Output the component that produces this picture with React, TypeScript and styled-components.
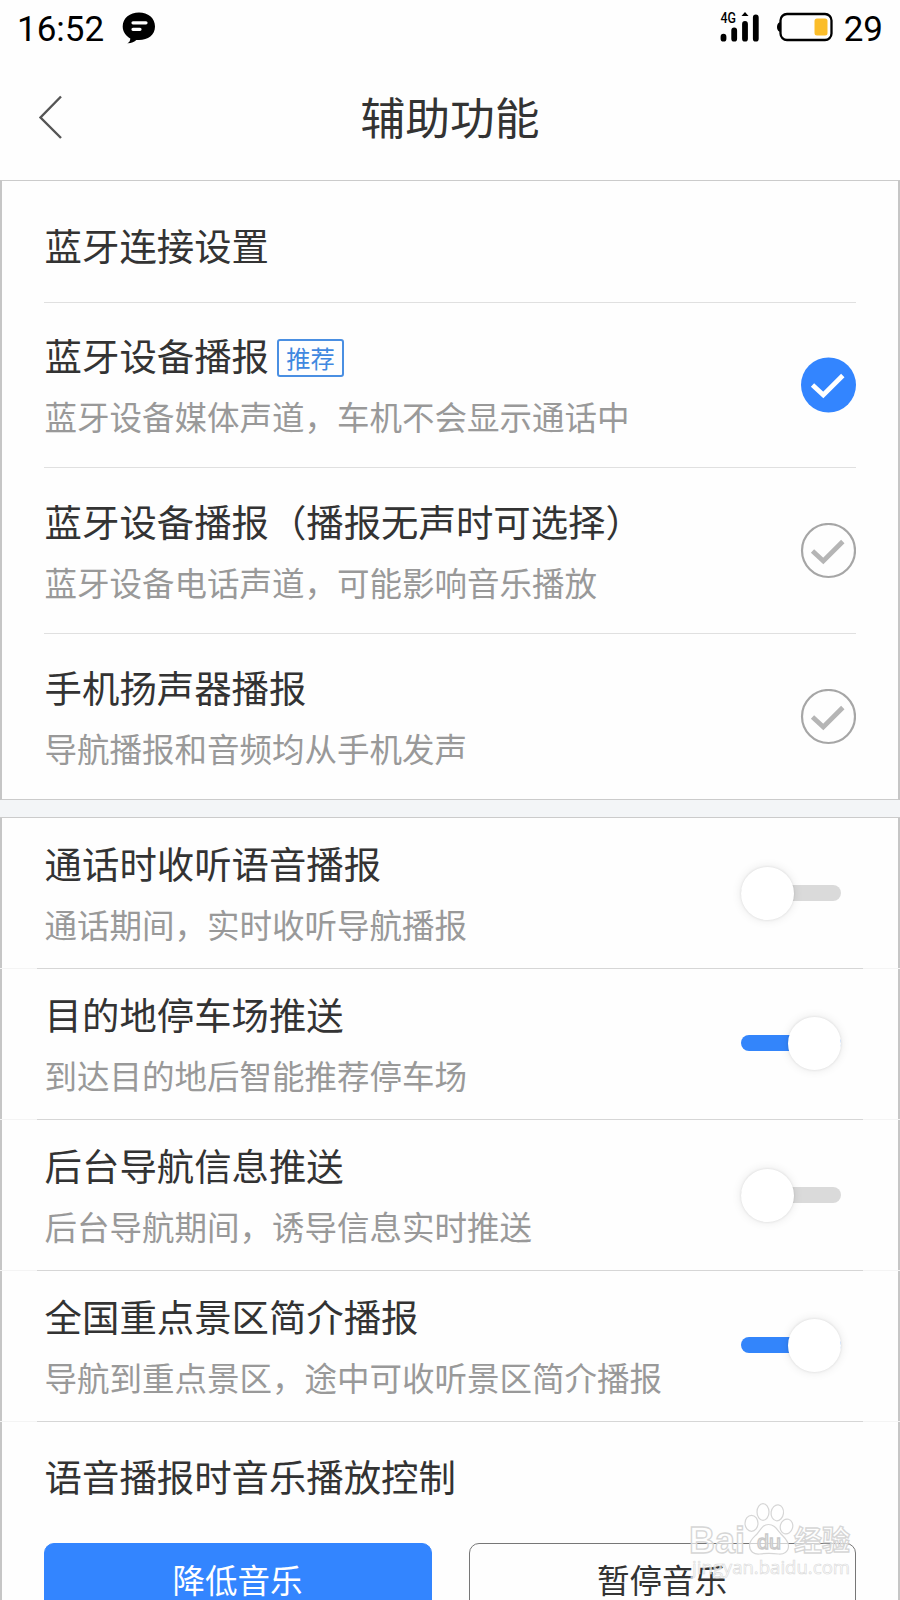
import React from "react";
import styled, { createGlobalStyle } from "styled-components";

const GlobalStyle = createGlobalStyle`
  * { box-sizing: border-box; }
  body {
    margin: 0;
    background: #fefefe;
    font-family: "Noto Sans CJK SC", sans-serif;
  }
`;

const Screen = styled.div`
  position: relative;
  width: 900px;
  height: 1600px;
  overflow: hidden;
  background: #fefefe;
  color: #333;
`;

const StatusBar = styled.div`
  display: flex;
  align-items: center;
  justify-content: space-between;
  height: 57px;
  padding: 0 17px;
  font: 400 35px/57px Roboto, sans-serif;
  color: #000;
`;

const StatusGroup = styled.div`
  display: flex;
  align-items: center;
  height: 57px;
`;

const StatusText = styled.span`
  padding-top: 1px;
`;

const MessageIcon = styled.svg`
  margin: 0 0 2px 18px;
`;

const SignalIcon = styled.svg`
  margin-bottom: 3px;
`;

const BatteryIcon = styled.svg`
  margin: 0 11px 3px 16px;
`;

const Header = styled.header`
  display: grid;
  grid-template-columns: 104px 1fr 104px;
  align-items: center;
  height: 123px;
`;

const BackButton = styled.button`
  display: flex;
  padding: 0 0 3px 36px;
  border: 0;
  background: none;
`;

const PageTitle = styled.h1`
  margin: 0;
  padding-bottom: 5px;
  text-align: center;
  font-size: 44.8px;
  font-weight: 400;
  line-height: 60px;
`;

const Panel = styled.section`
  border-top: 1px solid #cbcbcb;
`;

const RadioPanel = styled(Panel)`
  padding: 0 42px;
  border-left: 2px solid #c6c6c6;
  border-right: 2px solid #c6c6c6;
  border-bottom: 1px solid #cbcbcb;
`;

const Gap = styled.div`
  height: 17px;
  background: #f3f5f7;
`;

const Row = styled.div`
  display: flex;
  align-items: center;
  justify-content: space-between;
`;

const HeadingRow = styled(Row)`
  height: 121px;
  padding-top: 7px;
`;

const RadioRow = styled(Row)<{ $height: number }>`
  height: ${(p) => p.$height}px;
  border-top: 1px solid #e0e0e0;
`;

const SwitchRow = styled(Row)`
  height: 150px;
  padding: 0 57px 0 42px;
  border-left: 2px solid #c6c6c6;
  border-right: 2px solid #c6c6c6;
`;

const Separator = styled.div`
  height: 1px;
  padding: 0 37px;
  background: #f4f4f4;

  &::after {
    content: "";
    display: block;
    height: 1px;
    background: #d6d6d6;
  }
`;

const Labels = styled.div`
  display: flex;
  flex-direction: column;
  gap: 14px;
  padding-bottom: 2px;
`;

const TitleLine = styled.div`
  display: flex;
  align-items: center;
  height: 50px;
  padding-left: 0.6px;
`;

const Title = styled.span`
  font-size: 37.4px;
  line-height: 50px;
  white-space: nowrap;
`;

const Subtitle = styled.span`
  padding-left: 0.4px;
  font-size: 32.5px;
  line-height: 44px;
  color: #999;
  white-space: nowrap;
`;

const Badge = styled.span`
  width: 67px;
  height: 38px;
  margin: 5px 0 0 8px;
  border: 2px solid #4a8fe2;
  border-radius: 3px;
  color: #4088e0;
  font-size: 24.3px;
  line-height: 33px;
  text-align: center;
`;

const SwitchTrack = styled.span<{ $on: boolean }>`
  display: flex;
  align-items: center;
  justify-content: ${(p) => (p.$on ? "flex-end" : "flex-start")};
  width: 100px;
  height: 16px;
  margin-bottom: ${(p) => (p.$on ? 2 : 0)}px;
  border-radius: 8px;
  background: ${(p) => (p.$on ? "#3385fb" : "#dadada")};
`;

const SwitchKnob = styled.span`
  flex: none;
  width: 53px;
  height: 53px;
  border-radius: 50%;
  background: #fff;
  box-shadow: 0 0 2px 1px rgba(0, 0, 0, 0.05), 0 0 10px 1px rgba(0, 0, 0, 0.08);
`;

const MusicBlock = styled.div`
  height: 260px;
  padding: 29px 42px 0;
  border-left: 2px solid #c6c6c6;
  border-right: 2px solid #c6c6c6;
`;

const ButtonGrid = styled.div`
  display: grid;
  grid-template-columns: 388px 387px;
  gap: 37px;
  margin-top: 42px;
`;

const ChoiceButton = styled.button<{ $primary?: boolean }>`
  height: 76px;
  padding: 0 1px 4px 0;
  border: 1px solid ${(p) => (p.$primary ? "#3385ff" : "#777")};
  border-radius: 10px;
  background: ${(p) => (p.$primary ? "#3385ff" : "transparent")};
  color: ${(p) => (p.$primary ? "#fff" : "#333")};
  font: 400 32.5px/44px "Noto Sans CJK SC", sans-serif;
`;

const Watermark = styled.svg`
  position: absolute;
  left: 684px;
  top: 1496px;
`;

function CheckMark({ checked }: { checked?: boolean }) {
  return (
    <svg width="56" height="56" viewBox="0 0 56 56" fill="none">
      {checked ? (
        <circle cx="28.5" cy="28" r="27.5" fill="#3385ff" />
      ) : (
        <circle cx="28.5" cy="27.5" r="26.5" stroke="#a6a6a6" strokeWidth="2.2" />
      )}
      <path d="M12.5 28 23.3 38 42.8 18.5" stroke={checked ? "#fff" : "#b5b5b5"} strokeWidth="4.8" />
    </svg>
  );
}

function Switch({ on = false }: { on?: boolean }) {
  return (
    <SwitchTrack $on={on} role="switch" aria-checked={on}>
      <SwitchKnob />
    </SwitchTrack>
  );
}

const outputs = [
  { title: "蓝牙设备播报", sub: "蓝牙设备媒体声道，车机不会显示通话中", badge: "推荐", checked: true, height: 165 },
  { title: "蓝牙设备播报（播报无声时可选择）", sub: "蓝牙设备电话声道，可能影响音乐播放", height: 166 },
  { title: "手机扬声器播报", sub: "导航播报和音频均从手机发声", height: 166 },
];

const toggles = [
  { title: "通话时收听语音播报", sub: "通话期间，实时收听导航播报", on: false },
  { title: "目的地停车场推送", sub: "到达目的地后智能推荐停车场", on: true },
  { title: "后台导航信息推送", sub: "后台导航期间，诱导信息实时推送", on: false },
  { title: "全国重点景区简介播报", sub: "导航到重点景区，途中可收听景区简介播报", on: true },
];

export default function App() {
  return (
    <Screen>
      <GlobalStyle />
      <StatusBar>
        <StatusGroup>
          <StatusText>16:52</StatusText>
          <MessageIcon width="34" height="34" viewBox="0 0 34 34">
            <path
              d="M17 1.500C26 1.500 33 7 33 15.500S26 29 17 29h-2.700c-1.800 2-5.200 3.500-9 3.300 2-.9 3-2.700 3-4.900C4 25 .7 20.800.7 15.500.7 7 8 1.500 17 1.500Z"
              fill="#000"
            />
            <path d="M11 11.800H24M11 18.300H18" stroke="#fff" strokeWidth="3.200" strokeLinecap="round" />
          </MessageIcon>
        </StatusGroup>
        <StatusGroup>
          <SignalIcon width="40" height="32" viewBox="0 0 40 32">
            <text x="0.500" y="12.300" fontFamily="Roboto" fontSize="14" fontWeight="500" textLength="15.500" lengthAdjust="spacingAndGlyphs">
              4G
            </text>
            <path
              d="M4 24.200v2M14.700 18v8.200M25.500 11.500v14.700M36.300 5v21.200"
              transform="translate(-.5 1.500)"
              stroke="#000"
              strokeWidth="5.800"
              strokeLinecap="round"
            />
            <path d="M25 1 28.500 5H21.500Z" fill="#000" />
          </SignalIcon>
          <BatteryIcon width="57" height="30" viewBox="0 0 57 30" fill="none">
            <path d="M5 10C2 10 1 13 1 15s1 5 4 5Z" fill="#000" />
            <rect x="4.500" y="2" width="51" height="26" rx="6.500" stroke="#000" strokeWidth="2.300" />
            <rect x="38.500" y="6.500" width="13" height="17" rx="2.500" fill="#fbbd29" />
          </BatteryIcon>
          <StatusText>29</StatusText>
        </StatusGroup>
      </StatusBar>

      <Header>
        <BackButton aria-label="返回">
          <svg width="28" height="46" viewBox="0 0 28 46" fill="none">
            <path d="M25 2.500 4.500 23.500 25 44" stroke="#555" strokeWidth="2.400" />
          </svg>
        </BackButton>
        <PageTitle>辅助功能</PageTitle>
      </Header>

      <RadioPanel>
        <HeadingRow>
          <TitleLine>
            <Title>蓝牙连接设置</Title>
          </TitleLine>
        </HeadingRow>
        {outputs.map((o) => (
          <RadioRow key={o.sub} $height={o.height}>
            <Labels>
              <TitleLine>
                <Title>{o.title}</Title>
                {o.badge && <Badge>{o.badge}</Badge>}
              </TitleLine>
              <Subtitle>{o.sub}</Subtitle>
            </Labels>
            <CheckMark checked={o.checked} />
          </RadioRow>
        ))}
      </RadioPanel>

      <Gap />

      <Panel>
        {toggles.map((t) => (
          <React.Fragment key={t.title}>
            <SwitchRow>
              <Labels>
                <TitleLine>
                  <Title>{t.title}</Title>
                </TitleLine>
                <Subtitle>{t.sub}</Subtitle>
              </Labels>
              <Switch on={t.on} />
            </SwitchRow>
            <Separator />
          </React.Fragment>
        ))}
        <MusicBlock>
          <TitleLine>
            <Title>语音播报时音乐播放控制</Title>
          </TitleLine>
          <ButtonGrid>
            <ChoiceButton $primary>降低音乐</ChoiceButton>
            <ChoiceButton>暂停音乐</ChoiceButton>
          </ButtonGrid>
        </MusicBlock>
      </Panel>

      <Watermark width="180" height="88" viewBox="0 0 180 88" stroke="#d6d6d6" fill="#fff" fillOpacity="0.65">
        <g strokeWidth="1.200">
          <ellipse cx="67.500" cy="27.300" rx="6.500" ry="8" />
          <ellipse cx="79" cy="16" rx="6" ry="8.300" />
          <ellipse cx="93.300" cy="16.800" rx="6.200" ry="8" transform="rotate(8 93.300 16.800)" />
          <ellipse cx="102.500" cy="30.500" rx="6.200" ry="7.500" transform="rotate(15 102.500 30.500)" />
          <path d="M84.500 28.500c6 0 8.500 5 12.500 9.500 4 4 7.500 7 7.500 12 0 6-5 8.500-10 8-6-.8-13-.8-19 0-5.500.5-10-2.500-10-8.500 0-5 3.500-7.500 7.500-11.500 4-4.500 5.500-9.500 11.500-9.500Z" />
        </g>
        <g fontFamily="Liberation Sans" fontWeight="700" strokeWidth="1.300">
          <text x="5" y="57" fontSize="36" textLength="56" lengthAdjust="spacingAndGlyphs">Bai</text>
          <text x="73" y="53" fontSize="20" fontWeight="400" textLength="24" lengthAdjust="spacingAndGlyphs" stroke="#cacaca">du</text>
        </g>
        <text x="110" y="55" fontFamily="Noto Sans CJK SC" fontWeight="700" fontSize="28" strokeWidth="1.300" textLength="56" lengthAdjust="spacingAndGlyphs">
          经验
        </text>
        <text x="8" y="78" fontFamily="Open Sans" fontSize="19" strokeWidth="0.600" stroke="#d8d8d8" textLength="158" lengthAdjust="spacingAndGlyphs">
          jingyan.baidu.com
        </text>
      </Watermark>
    </Screen>
  );
}
